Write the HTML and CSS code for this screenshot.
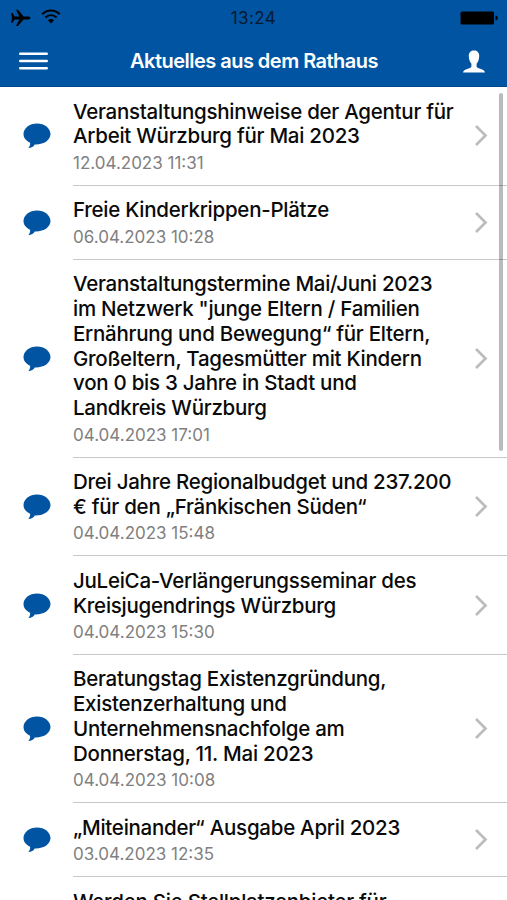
FILE: index.html
```html
<!DOCTYPE html>
<html lang="de">

<head>
  <meta charset="UTF-8">
  <meta name="viewport" content="width=device-width, initial-scale=1.0">
  <title>Aktuelles aus dem Rathaus</title>
  <link rel="stylesheet" href="styles.css">
</head>

<body>
  <svg class="symbols" aria-hidden="true">
    <symbol id="bubble" viewBox="0 0 28 26">
      <path d="M14 .5C6.500.5.500 5.200.500 11c0 3.700 2.400 6.800 6.600 8.700.3 2-.4 3.700-1.700 5.300 3 0 5.300-1.500 6.300-3.600 8.900.5 15.800-4.300 15.800-10.400C27.500 5.200 21.500.5 14 .5z" fill="#0054a2"/>
    </symbol>
    <symbol id="chevron" viewBox="0 0 14 24">
      <path d="M2 2 11.500 11.500 2 21" fill="none" stroke="#bcbcbc" stroke-width="2.700"/>
    </symbol>
  </svg>

  <header class="header">
    <div class="status-bar">
      <div class="status-left">
        <svg class="plane" width="20" height="18" viewBox="0 0 20 18">
          <path d="M0 4h1.600L3.600 7.400H8.400L5 .7h2l5.600 6.700H17c1.400 0 2.500.7 2.500 1.500s-1.100 1.500-2.500 1.500h-4.400L7 17.100H5l3.400-6.700H3.600L1.600 13.800H0L1 8.900z"/>
        </svg>
        <svg class="wifi" width="20" height="16" viewBox="0 0 20 16">
          <g fill="none" stroke="#000" stroke-width="2">
            <path d="M1.200 5.200C6.300.3 13.700.3 18.800 5.200"/>
            <path d="M4.400 8.600c3.400-3.100 7.800-3.100 11.200 0"/>
          </g>
          <path d="M6.900 11.300c1.900-1.600 4.300-1.600 6.200 0L10 14.600z"/>
        </svg>
      </div>
      <span class="clock">13:24</span>
      <svg class="battery" width="38" height="14" viewBox="0 0 38 14">
        <rect x=".5" y=".5" width="33.500" height="13" rx="1.500"/>
        <path d="M35.500 4.500c1.600.3 2.300 1.300 2.300 2.500s-.7 2.200-2.300 2.500z"/>
      </svg>
    </div>
    <nav class="nav-bar">
      <svg class="menu-icon" width="30" height="18" viewBox="0 0 30 18">
        <path d="M1.300 1.800h26.400M1.300 9h26.400M1.300 16.200h26.400" stroke="#fff" stroke-width="2.600" stroke-linecap="round"/>
      </svg>
      <h1>Aktuelles aus dem Rathaus</h1>
      <svg class="user-icon" width="22" height="23" viewBox="0 0 22 23">
        <path d="M11 .5c3.200 0 5.200 2 5.200 5.300 0 3.600-1.100 6.500-2.600 7.900v2.500c0 1.200.8 1.700 2.800 2.300 3.200.9 5.100 1.600 5.600 3.900H0c.5-2.300 2.400-3 5.600-3.900 2-.6 2.800-1.100 2.800-2.300v-2.500C6.900 12.300 5.800 9.400 5.800 5.800 5.800 2.500 7.800.5 11 .5z" fill="#fff"/>
      </svg>
    </nav>
  </header>

  <main class="news-list">
    <article class="news-item">
      <svg class="bubble"><use href="#bubble"/></svg>
      <div class="news-body">
        <div class="news-text">
          <h2>Veranstaltungshinweise der Agentur für<br>Arbeit Würzburg für Mai 2023</h2>
          <time>12.04.2023 11:31</time>
        </div>
        <svg class="chevron"><use href="#chevron"/></svg>
      </div>
    </article>
    <article class="news-item">
      <svg class="bubble"><use href="#bubble"/></svg>
      <div class="news-body">
        <div class="news-text">
          <h2>Freie Kinderkrippen-Plätze</h2>
          <time>06.04.2023 10:28</time>
        </div>
        <svg class="chevron"><use href="#chevron"/></svg>
      </div>
    </article>
    <article class="news-item">
      <svg class="bubble"><use href="#bubble"/></svg>
      <div class="news-body">
        <div class="news-text">
          <h2>Veranstaltungstermine Mai/Juni 2023<br>im Netzwerk "junge Eltern / Familien<br>Ernährung und Bewegung“ für Eltern,<br>Großeltern, Tagesmütter mit Kindern<br>von 0 bis 3 Jahre in Stadt und<br>Landkreis Würzburg</h2>
          <time>04.04.2023 17:01</time>
        </div>
        <svg class="chevron"><use href="#chevron"/></svg>
      </div>
    </article>
    <article class="news-item">
      <svg class="bubble"><use href="#bubble"/></svg>
      <div class="news-body">
        <div class="news-text">
          <h2>Drei Jahre Regionalbudget und 237.200<br>€ für den „Fränkischen Süden“</h2>
          <time>04.04.2023 15:48</time>
        </div>
        <svg class="chevron"><use href="#chevron"/></svg>
      </div>
    </article>
    <article class="news-item">
      <svg class="bubble"><use href="#bubble"/></svg>
      <div class="news-body">
        <div class="news-text">
          <h2>JuLeiCa-Verlängerungsseminar des<br>Kreisjugendrings Würzburg</h2>
          <time>04.04.2023 15:30</time>
        </div>
        <svg class="chevron"><use href="#chevron"/></svg>
      </div>
    </article>
    <article class="news-item">
      <svg class="bubble"><use href="#bubble"/></svg>
      <div class="news-body">
        <div class="news-text">
          <h2>Beratungstag Existenzgründung,<br>Existenzerhaltung und<br>Unternehmensnachfolge am<br>Donnerstag, 11. Mai 2023</h2>
          <time>04.04.2023 10:08</time>
        </div>
        <svg class="chevron"><use href="#chevron"/></svg>
      </div>
    </article>
    <article class="news-item">
      <svg class="bubble"><use href="#bubble"/></svg>
      <div class="news-body">
        <div class="news-text">
          <h2>„Miteinander“ Ausgabe April 2023</h2>
          <time>03.04.2023 12:35</time>
        </div>
        <svg class="chevron"><use href="#chevron"/></svg>
      </div>
    </article>
    <article class="news-item">
      <div class="bubble"></div>
      <div class="news-body">
        <div class="news-text">
          <h2>Werden Sie Stellplatzanbieter für</h2>
        </div>
      </div>
    </article>
    <div class="scrollbar"></div>
  </main>
</body>

</html>
```

FILE: styles.css
```css
* {
  margin: 0;
  padding: 0;
  box-sizing: border-box;
}

body {
  font-family: Inter, "Liberation Sans", sans-serif;
  background: #fff;
  color: #0a0a0a;
  height: 100vh;
  overflow: hidden;
  display: flex;
  flex-direction: column;
}

.symbols {
  display: none;
}

.header {
  height: 87px;
  flex-shrink: 0;
  background: #0054a2;
  border-bottom: 1px solid #00468c;
}

.status-bar {
  height: 35px;
  padding: 0 9px 0 11px;
  display: grid;
  grid-template-columns: 1fr auto 1fr;
  align-items: center;
}

.status-left {
  display: flex;
  align-items: center;
  gap: 10px;
}

.wifi {
  margin-top: -2px;
}

.clock {
  color: #061a30;
  font-size: 17px;
  letter-spacing: 0.4px;
  margin-right: 2px;
}

.battery {
  justify-self: end;
}

.nav-bar {
  height: 52px;
  padding: 0 22px 0 19px;
  display: flex;
  justify-content: space-between;
  align-items: center;
}

.nav-bar h1 {
  color: #fff;
  font-size: 20px;
  font-weight: 600;
  letter-spacing: -0.52px;
  margin-right: 4px;
}

.news-list {
  flex: 1;
  min-height: 0;
  overflow: hidden;
  position: relative;
}

.news-item {
  display: flex;
  align-items: center;
}

.bubble {
  width: 28px;
  height: 26px;
  margin: 0 22px 0 23px;
  flex-shrink: 0;
}

.news-body {
  flex: 1;
  display: flex;
  justify-content: space-between;
  align-items: center;
  padding: 12px 19px 9px 0;
  border-bottom: 1px solid #c8c8c8;
}

.news-text {
  white-space: nowrap;
}

.news-text h2 {
  font-size: 20.5px;
  font-weight: 500;
  line-height: 24.85px;
  letter-spacing: -0.26px;
  padding-top: 0.6px;
}

.news-text time {
  display: block;
  color: #808080;
  font-size: 17px;
  line-height: 25px;
  padding-top: 1.4px;
}

.chevron {
  width: 14px;
  height: 24px;
  margin-top: -2px;
}

.scrollbar {
  position: absolute;
  top: 6px;
  right: 4px;
  width: 4px;
  height: 358px;
  border-radius: 2px;
  background: rgba(0, 0, 0, 0.27);
}
```
